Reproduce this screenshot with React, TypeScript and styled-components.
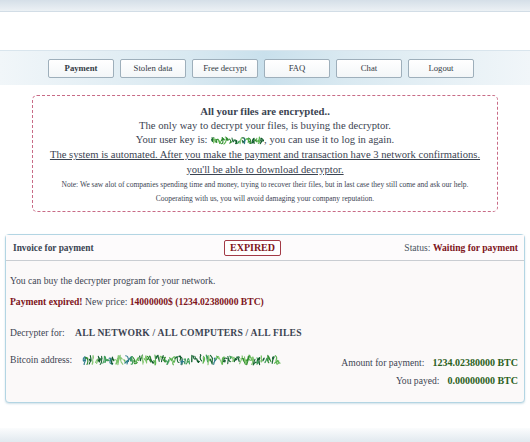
import React from 'react'
import styled, { createGlobalStyle } from 'styled-components'

const GlobalStyle = createGlobalStyle`
  body {
    margin: 0;
    background: #ffffff;
  }
`

const Page = styled.div`
  width: 530px;
  height: 442px;
  overflow: hidden;
  display: flex;
  flex-direction: column;
  font-family: 'Liberation Serif', 'DejaVu Serif', serif;
  color: #3b4452;
`

const TopBand = styled.div`
  height: 11px;
  background: linear-gradient(#d5dfe8, #ecf1f5);
  border-bottom: 1px solid #d2dde6;
`

const NavBar = styled.div`
  margin-top: 38px;
  height: 34px;
  display: flex;
  align-items: center;
  justify-content: center;
  gap: 6px;
  padding-right: 8px;
  border-top: 1px solid #d9e5ed;
  background: linear-gradient(to right, #f1f6f9 0%, #d9e9f1 35%, #c9e0ec 50%, #d9e9f1 65%, #f1f6f9 100%);
`

const NavButton = styled.div<{ $active?: boolean }>`
  width: 66px;
  height: 19px;
  box-sizing: border-box;
  display: flex;
  align-items: center;
  justify-content: center;
  border: 1px solid #9eafbb;
  border-radius: 2px;
  background: linear-gradient(#ffffff, #f3f6f8);
  font-size: 8.7px;
  font-weight: ${(p) => (p.$active ? 700 : 400)};
  color: #333a44;
`

const AlertBox = styled.div`
  margin: 10px 0 0 32px;
  width: 466px;
  height: 117px;
  box-sizing: border-box;
  border: 1px dashed #c86b86;
  border-radius: 5px;
  padding-top: 8px;
  display: flex;
  flex-direction: column;
  align-items: center;
  text-align: center;
`

const AlertTitle = styled.div`
  font-size: 10.7px;
  font-weight: 700;
  line-height: 14.5px;
`

const AlertLine = styled.div<{ $underline?: boolean }>`
  font-size: 10.6px;
  line-height: 14.8px;
  text-decoration: ${(p) => (p.$underline ? 'underline' : 'none')};
  display: flex;
  align-items: center;
  white-space: pre;
`

const AlertNote = styled.div`
  font-size: 7.5px;
  line-height: 14px;
`

const Invoice = styled.div`
  margin: 22px 0 0 5px;
  width: 520px;
  height: 169px;
  box-sizing: border-box;
  border: 1px solid #b3d5e3;
  border-radius: 4px;
  background: #fbf9f9;
  box-shadow: 0 1px 2px rgba(140, 180, 200, 0.4);
  display: flex;
  flex-direction: column;
`

const InvoiceHeader = styled.div`
  height: 26px;
  box-sizing: border-box;
  display: grid;
  grid-template-columns: 211px auto 1fr;
  align-items: center;
  padding: 0 6px 0 7px;
  border-bottom: 1px solid #c9cdd2;
  background: #fdfbfc;
  font-size: 9.6px;
`

const HeaderTitle = styled.div`
  font-weight: 700;
  font-size: 9.4px;
  color: #3b4452;
`

const Badge = styled.div`
  border: 1px solid #a33a46;
  border-radius: 2px;
  padding: 1px 5px;
  line-height: 12px;
  font-weight: 700;
  font-size: 10px;
  color: #7e1420;
  background: #fff;
`

const Status = styled.div`
  justify-self: end;
  color: #4a5360;
`

const Red = styled.span`
  color: #7e1420;
  font-weight: 700;
`

const Green = styled.span`
  color: #2a5f1c;
  font-weight: 700;
  font-size: 10px;
`

const Body = styled.div`
  padding: 0 6px 0 4px;
  font-size: 9.6px;
  display: flex;
  flex-direction: column;
`

const Line = styled.div<{ $top: number }>`
  margin-top: ${(p) => p.$top}px;
  line-height: 12px;
  display: flex;
  align-items: center;
  white-space: pre;
`

const Caps = styled.span`
  font-weight: 700;
  margin-left: 8px;
  letter-spacing: 0.2px;
`

const AddressRow = styled.div`
  margin-top: 15px;
  display: flex;
  justify-content: space-between;
  align-items: flex-start;
`

const AddressLabel = styled.div`
  display: flex;
  align-items: center;
  line-height: 12px;
  gap: 9px;
`

const Amounts = styled.div`
  margin-top: 3px;
  display: flex;
  flex-direction: column;
  align-items: flex-end;
  gap: 6px;
  line-height: 12px;
`

const Amount = styled.div`
  display: flex;
  align-items: center;
  gap: 8px;
`

const BottomBand = styled.div`
  margin-top: 25px;
  flex: 1;
  background: linear-gradient(#fbfcfd, #e1e9ef);
`

const GREENS = ['#2f8a2f', '#5bb450', '#1d6a38', '#7cc36a', '#0f5a2a', '#3f9e5a', '#2c7a8a', '#88c878']

function scribble(width: number, height: number, step: number, seed: number) {
  let s = seed
  const rnd = () => {
    s = (s * 9301 + 49297) % 233280
    return s / 233280
  }
  const paths: { d: string; c: string }[] = []
  for (let x = 1; x < width - 3; x += step * (0.6 + rnd() * 0.6)) {
    const n = 2 + Math.floor(rnd() * 2)
    let d = `M${(x + rnd() * step).toFixed(1)} ${(1 + rnd() * (height - 2)).toFixed(1)}`
    for (let i = 0; i < n; i++) {
      const cx = x + rnd() * step * 1.6
      const cy = rnd() * height
      const px = x + rnd() * step * 1.4
      const py = 1 + rnd() * (height - 2)
      d += ` Q${cx.toFixed(1)} ${cy.toFixed(1)} ${px.toFixed(1)} ${py.toFixed(1)}`
    }
    paths.push({ d, c: GREENS[Math.floor(rnd() * GREENS.length)] })
  }
  return paths
}

const Scribble = ({ width, height, seed }: { width: number; height: number; seed: number }) => (
  <svg width={width} height={height} viewBox={`0 0 ${width} ${height}`}>
    {scribble(width, height, 3, seed).map((p, i) => (
      <path key={i} d={p.d} fill="none" stroke={p.c} strokeWidth={1.1} strokeLinecap="round" strokeLinejoin="round" />
    ))}
  </svg>
)

const tabs = ['Payment', 'Stolen data', 'Free decrypt', 'FAQ', 'Chat', 'Logout']

const App = () => (
  <>
    <GlobalStyle />
    <Page>
      <TopBand />
      <NavBar>
        {tabs.map((t, i) => (
          <NavButton key={t} $active={i === 0}>
            {t}
          </NavButton>
        ))}
      </NavBar>
      <AlertBox>
        <AlertTitle>All your files are encrypted..</AlertTitle>
        <AlertLine>The only way to decrypt your files, is buying the decryptor.</AlertLine>
        <AlertLine>
          {'Your user key is: '}
          <Scribble width={54} height={9} seed={17} />
          {', you can use it to log in again.'}
        </AlertLine>
        <AlertLine $underline>
          The system is automated. After you make the payment and transaction have 3 network confirmations.
        </AlertLine>
        <AlertLine $underline>you'll be able to download decryptor.</AlertLine>
        <AlertNote>
          Note: We saw alot of companies spending time and money, trying to recover their files, but in last case they
          still come and ask our help.
        </AlertNote>
        <AlertNote>Cooperating with us, you will avoid damaging your company reputation.</AlertNote>
      </AlertBox>
      <Invoice>
        <InvoiceHeader>
          <HeaderTitle>Invoice for payment</HeaderTitle>
          <Badge>EXPIRED</Badge>
          <Status>
            Status: <Red>Waiting for payment</Red>
          </Status>
        </InvoiceHeader>
        <Body>
          <Line $top={14}>You can buy the decrypter program for your network.</Line>
          <Line $top={9}>
            <Red>Payment expired!</Red>
            {' New price: '}
            <Red>14000000$ (1234.02380000 BTC)</Red>
          </Line>
          <Line $top={19}>
            {'Decrypter for: '}
            <Caps>ALL NETWORK / ALL COMPUTERS / ALL FILES</Caps>
          </Line>
          <AddressRow>
            <AddressLabel>
              Bitcoin address:
              <Scribble width={200} height={12} seed={91} />
            </AddressLabel>
            <Amounts>
              <Amount>
                Amount for payment: <Green>1234.02380000 BTC</Green>
              </Amount>
              <Amount>
                You payed: <Green>0.00000000 BTC</Green>
              </Amount>
            </Amounts>
          </AddressRow>
        </Body>
      </Invoice>
      <BottomBand />
    </Page>
  </>
)

export default App
